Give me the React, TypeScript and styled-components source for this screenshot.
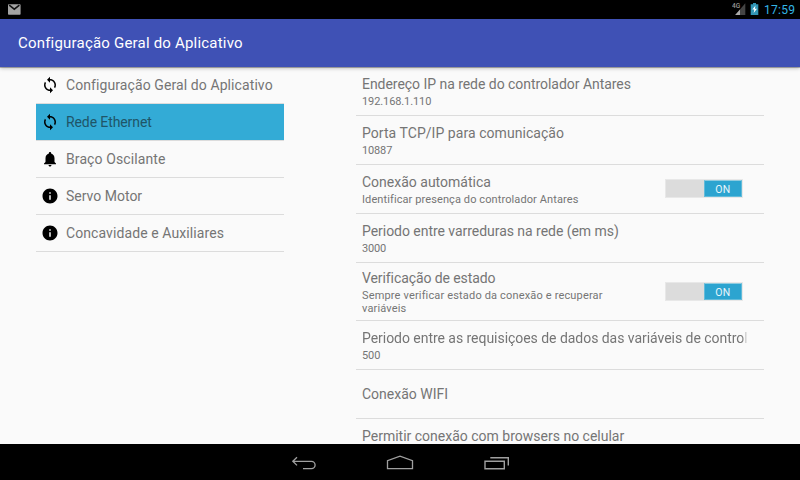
import React from "react";
import styled, { createGlobalStyle } from "styled-components";

const GlobalStyle = createGlobalStyle`
  * { box-sizing: border-box; }
  html, body { margin: 0; padding: 0; }
  body { font-family: Roboto, "Liberation Sans", sans-serif; background: #000; }
`;

const Screen = styled.div`
  width: 800px;
  height: 480px;
  display: flex;
  flex-direction: column;
  overflow: hidden;
  background: #fafafa;
`;

const StatusBar = styled.header`
  flex: none;
  height: 19px;
  padding: 0 5px 0 8px;
  background: #000;
  display: flex;
  justify-content: space-between;
  align-items: flex-start;
`;

const StatusIcons = styled.div`
  display: flex;
  align-items: flex-start;
  gap: 3px;
`;

const Clock = styled.span`
  width: 31px;
  margin-left: 1px;
  font-size: 12px;
  line-height: 20px;
  letter-spacing: 0.25px;
  color: #33b5e5;
  white-space: nowrap;
`;

const ActionBar = styled.div`
  flex: none;
  height: 48px;
  padding-left: 18px;
  background: #3f51b5;
  box-shadow: 0 1px 0 rgba(0, 0, 0, 0.25), 0 1px 4px rgba(0, 0, 0, 0.3);
  display: flex;
  align-items: center;
  z-index: 1;
`;

const BarTitle = styled.h1`
  margin: 0;
  font-size: 15px;
  font-weight: 400;
  line-height: 18px;
  letter-spacing: 0.2px;
  color: #fff;
`;

const Content = styled.main`
  flex: none;
  height: 377px;
  overflow: hidden;
  display: flex;
  gap: 72px;
  padding: 0 36px;
`;

const Categories = styled.nav`
  width: 248px;
`;

const Category = styled.div<{ $active?: boolean }>`
  height: 37px;
  padding-left: 4px;
  display: flex;
  align-items: center;
  gap: 6px;
  border-bottom: 1px solid #dcdcdc;
  background: ${(p) => (p.$active ? "#33abd6" : "transparent")};
  background-clip: padding-box;
  color: ${(p) => (p.$active ? "#1f5568" : "#757575")};
  font-size: 14px;
`;

const Label = styled.span<{ $spacing: number }>`
  line-height: 18px;
  letter-spacing: ${(p) => p.$spacing}px;
  white-space: nowrap;
`;

const Preferences = styled.section`
  width: 408px;
`;

const Preference = styled.div<{ $height: number }>`
  height: ${(p) => p.$height}px;
  padding-left: 6px;
  display: flex;
  align-items: center;
  border-bottom: 1px solid #dcdcdc;
  color: #757575;
`;

const PreferenceText = styled.div<{ $width: number }>`
  width: ${(p) => p.$width}px;
`;

const PreferenceTitle = styled.div<{ $spacing: number; $fade?: boolean }>`
  font-size: 14px;
  line-height: 18px;
  letter-spacing: ${(p) => p.$spacing}px;
  white-space: nowrap;
  overflow: hidden;
  mask-image: ${(p) => (p.$fade ? "linear-gradient(to right, #000 calc(100% - 6px), transparent)" : "none")};
`;

const Summary = styled.div<{ $spacing: number }>`
  font-size: 11px;
  line-height: 13px;
  letter-spacing: ${(p) => p.$spacing}px;
  white-space: pre-line;
  padding-top: 2px;
  margin-bottom: -1px;
`;

const Track = styled.div`
  width: 78px;
  height: 19px;
  margin: -1px 0 0 53px;
  border: 1px solid #e8e8e8;
  background: #dcdcdc;
  display: flex;
  justify-content: flex-end;
`;

const Thumb = styled.div`
  width: 38px;
  height: 17px;
  border: 1px solid #62bbda;
  border-top-color: #8fcbdf;
  background: #2ca4d0;
  color: #e9f6fb;
  font-size: 10.5px;
  line-height: 17px;
  text-align: center;
  letter-spacing: 0.5px;
`;

const NavBar = styled.footer`
  flex: none;
  height: 36px;
  padding-top: 2px;
  background: #000;
  display: flex;
  justify-content: center;
  align-items: center;
  gap: 68px;
`;

const MailIcon = () => (
  <svg width="13" height="19" viewBox="0 0 13 19">
    <rect x="0" y="4.3" width="12.6" height="10.5" rx="0.8" fill="#a3a3a3" />
    <path d="M1.2 5.2 6.3 9.2 11.4 5.2" fill="none" stroke="#111" strokeWidth="1.5" />
  </svg>
);

const SignalIcon = () => (
  <svg width="15" height="19" viewBox="0 0 15 19">
    <path d="M13.3 3.2V15H3.2Z" fill="#444" />
    <path d="M8 9.4V15H3.2Z" fill="#aaa" />
    <rect x="0" y="2" width="7.6" height="7" fill="#000" />
    <text x="0" y="8.3" fontSize="6.5" fontWeight="500" fill="#999">4G</text>
  </svg>
);

const BatteryIcon = () => (
  <svg width="10" height="19" viewBox="0 0 10 19">
    <path d="M3 3h3v1.2h2.3V15H.7V4.2H3Z" fill="#3195b5" />
    <path d="M5.5 5.5 2.3 9.6h2L3.7 13 7 8.8H4.9Z" fill="#fff" />
  </svg>
);

const paths = {
  sync: "M12 4V1L8 5l4 4V6c3.31 0 6 2.69 6 6 0 1.01-.25 1.97-.7 2.8l1.46 1.46C19.54 15.03 20 13.57 20 12c0-4.42-3.58-8-8-8zm0 14c-3.31 0-6-2.69-6-6 0-1.01.25-1.97.7-2.8L5.24 7.74C4.46 8.97 4 10.43 4 12c0 4.42 3.58 8 8 8v3l4-4-4-4v3z",
  bell: "M12 22c1.1 0 2-.9 2-2h-4c0 1.1.9 2 2 2zm6-6v-5c0-3.07-1.63-5.64-4.5-6.32V4c0-.83-.67-1.5-1.5-1.5s-1.5.67-1.5 1.5v.68C7.64 5.36 6 7.92 6 11v5l-2 2v1h16v-1l-2-2z",
  info: "M12 2C6.48 2 2 6.48 2 12s4.48 10 10 10 10-4.48 10-10S17.52 2 12 2zm1 15h-2v-6h2v6zm0-8h-2V7h2v2z",
};

const CategoryIcon = ({ name }: { name: keyof typeof paths }) => (
  <svg width="20" height="18" viewBox="0 0 20 18">
    <path transform="translate(1 0) scale(.75)" d={paths[name]} fill="#000" />
  </svg>
);

const BackIcon = () => (
  <svg width="28" height="20" viewBox="0 0 28 20" fill="none" stroke="#a0a0a0" strokeWidth="1.3">
    <path d="M7 4.2 2.8 8.3 7 12.4M2.8 8.3H21.4a3.7 3.7 0 0 1 0 7.4H13" />
  </svg>
);

const HomeIcon = () => (
  <svg width="28" height="20" viewBox="0 0 28 20" fill="none" stroke="#a0a0a0" strokeWidth="1.3">
    <path d="M1.5 15.7V7.6L14 3.2 26.5 7.6V15.7Z" />
  </svg>
);

const RecentIcon = () => (
  <svg width="28" height="20" viewBox="0 0 28 20" fill="none" stroke="#a0a0a0" strokeWidth="1.4">
    <path d="M3 8.3H22.3V15.7H3ZM8.3 4.7H26.3V12.5" />
  </svg>
);

const categories: { label: string; icon: keyof typeof paths; spacing: number; active?: boolean }[] = [
  { label: "Configuração Geral do Aplicativo", icon: "sync", spacing: 0.09 },
  { label: "Rede Ethernet", icon: "sync", spacing: -0.1, active: true },
  { label: "Braço Oscilante", icon: "bell", spacing: 0.1 },
  { label: "Servo Motor", icon: "info", spacing: 0 },
  { label: "Concavidade e Auxiliares", icon: "info", spacing: 0.09 },
];

interface PreferenceData {
  title: string;
  spacing: number;
  summary?: string;
  summarySpacing?: number;
  toggle?: boolean;
  fade?: boolean;
  height?: number;
}

const preferences: PreferenceData[] = [
  { title: "Endereço IP na rede do controlador Antares", spacing: -0.04, summary: "192.168.1.110", summarySpacing: -0.1 },
  { title: "Porta TCP/IP para comunicação", spacing: 0.05, summary: "10887", summarySpacing: -0.15 },
  { title: "Conexão automática", spacing: 0, summary: "Identificar presença do controlador Antares", summarySpacing: 0.1, toggle: true },
  { title: "Periodo entre varreduras na rede (em ms)", spacing: -0.04, summary: "3000", summarySpacing: -0.15 },
  { title: "Verificação de estado", spacing: -0.09, summary: "Sempre verificar estado da conexão e recuperar\nvariáveis", summarySpacing: 0.16, toggle: true, height: 58 },
  { title: "Periodo entre as requisiçoes de dados das variáveis de controle", spacing: -0.04, summary: "500", summarySpacing: -0.1, fade: true },
  { title: "Conexão WIFI", spacing: 0 },
  { title: "Permitir conexão com browsers no celular", spacing: 0, summary: "Desabilitado" },
];

export default function App() {
  return (
    <>
      <GlobalStyle />
      <Screen>
        <StatusBar>
          <MailIcon />
          <StatusIcons>
            <SignalIcon />
            <BatteryIcon />
            <Clock>17:59</Clock>
          </StatusIcons>
        </StatusBar>
        <ActionBar>
          <BarTitle>Configuração Geral do Aplicativo</BarTitle>
        </ActionBar>
        <Content>
          <Categories>
            {categories.map((c) => (
              <Category key={c.label} $active={c.active}>
                <CategoryIcon name={c.icon} />
                <Label $spacing={c.spacing}>{c.label}</Label>
              </Category>
            ))}
          </Categories>
          <Preferences>
            {preferences.map((p) => (
              <Preference key={p.title} $height={p.height ?? 49}>
                <PreferenceText $width={p.toggle ? 250 : 386}>
                  <PreferenceTitle $spacing={p.spacing} $fade={p.fade}>{p.title}</PreferenceTitle>
                  {p.summary && <Summary $spacing={p.summarySpacing ?? 0}>{p.summary}</Summary>}
                </PreferenceText>
                {p.toggle && (
                  <Track>
                    <Thumb>ON</Thumb>
                  </Track>
                )}
              </Preference>
            ))}
          </Preferences>
        </Content>
        <NavBar>
          <BackIcon />
          <HomeIcon />
          <RecentIcon />
        </NavBar>
      </Screen>
    </>
  );
}
